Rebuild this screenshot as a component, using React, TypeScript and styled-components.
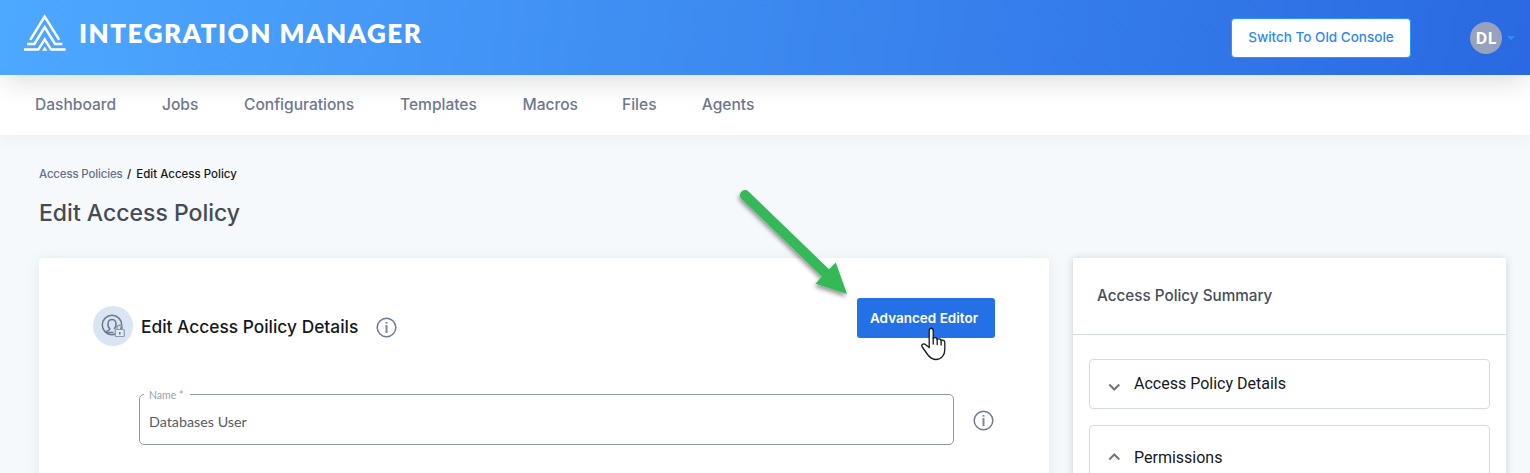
import React from "react";
import styled, { createGlobalStyle } from "styled-components";

const Global = createGlobalStyle`
  * { box-sizing: border-box; }
  html, body { margin: 0; padding: 0; overflow: hidden; background: #f5f9fc; }
  body { font-family: Inter, "Liberation Sans", sans-serif; }
`;

const Page = styled.div`
  position: relative;
  height: 473px;
  overflow: hidden;
  background: #f5f9fc;
`;

const Header = styled.header`
  position: relative;
  z-index: 2;
  display: flex;
  align-items: center;
  height: 75px;
  padding: 0 15px 0 24px;
  background: linear-gradient(100deg, #4da8ff 0%, #2a69e1 100%);
  box-shadow: 0 12px 24px -4px rgba(40, 60, 60, 0.15);
`;

const Brand = styled.div`
  display: flex;
  align-items: center;
  margin-right: auto;
  padding-bottom: 10px;
  gap: 13px;
`;

const BrandName = styled.span`
  font-family: Lato, sans-serif;
  font-weight: 800;
  font-size: 26px;
  line-height: 26px;
  letter-spacing: 1.5px;
  color: #fff;
  white-space: nowrap;
`;

const ConsoleButton = styled.button`
  width: 180px;
  height: 40px;
  padding: 0 0 2px;
  border: 1px solid #2b95ff;
  border-radius: 4px;
  background: #fff;
  color: #2b8af5;
  font: 500 13.5px Inter, sans-serif;
  white-space: nowrap;
`;

const UserMenu = styled.div`
  display: flex;
  align-items: center;
  gap: 5px;
  margin-left: 59px;
`;

const Avatar = styled.span`
  display: flex;
  align-items: center;
  justify-content: center;
  width: 32px;
  height: 32px;
  border-radius: 50%;
  background: #98a2bd;
  color: #fff;
  font: 700 16px "Open Sans", sans-serif;
`;

const Caret = styled.span`
  border: 4px solid transparent;
  border-top-color: #2b90f5;
  border-bottom: 0;
`;

const Nav = styled.nav`
  position: relative;
  z-index: 1;
  display: flex;
  align-items: center;
  gap: 45.5px;
  height: 60px;
  padding: 0 0 2px 35px;
  background: #fff;
  box-shadow: 0 4px 16px rgba(50, 70, 80, 0.05);
`;

const NavItem = styled.a<{ $w: number }>`
  width: ${(p) => p.$w}px;
  color: #6e7991;
  font-size: 15.55px;
  font-weight: 500;
  white-space: nowrap;
`;

const Main = styled.main`
  padding: 31px 24px 0 39px;
`;

const Breadcrumb = styled.div`
  display: flex;
  gap: 4px;
  height: 16px;
  color: #15181d;
  font-size: 11.5px;
  line-height: 16px;
  font-weight: 500;
`;

const CrumbLink = styled.a`
  width: 84px;
  letter-spacing: -0.17px;
  white-space: nowrap;
  color: #66718a;
`;

const CrumbCurrent = styled.span`
  margin-left: 1px;
`;

const Title = styled.h1`
  margin: 15px 0 29px;
  height: 32px;
  line-height: 32px;
  font-size: 23px;
  font-weight: 500;
  color: #464c56;
`;

const Columns = styled.div`
  display: flex;
  gap: 24px;
`;

const Card = styled.section`
  width: 1010px;
  height: 260px;
  padding: 40px 54px;
  border-radius: 4px;
  background: #fff;
  box-shadow: 0 2px 14px rgba(60, 80, 100, 0.1);
`;

const CardHeader = styled.div`
  display: flex;
  height: 56px;
`;

const IconDisc = styled.span`
  display: flex;
  align-items: center;
  justify-content: center;
  width: 40px;
  height: 40px;
  margin: 8px 8px 0 0;
  border-radius: 50%;
  background: #d9e5f2;
`;

const CardTitle = styled.h2`
  margin: 18px 18px 0 0;
  font-size: 17.35px;
  line-height: 22px;
  height: 22px;
  font-weight: 500;
  color: #15181d;
  white-space: nowrap;
`;

const InfoSlot = styled.span<{ $top: number }>`
  display: flex;
  margin-top: ${(p) => p.$top}px;
`;

const EditorButton = styled.button`
  width: 138px;
  height: 40px;
  margin-left: auto;
  padding: 0 4px 0 0;
  border: 0;
  border-radius: 3px;
  background: #2471e7;
  color: #fff;
  font: 600 13.5px Inter, sans-serif;
  white-space: nowrap;
`;

const FieldRow = styled.div`
  display: flex;
  padding: 34px 0 0 46px;
  gap: 19px;
`;

const Field = styled.fieldset`
  width: 815px;
  height: 57px;
  margin: 0;
  padding: 0 0 0 5px;
  border: 1px solid #8e98b3;
  border-radius: 5px;
`;

const Legend = styled.legend`
  width: 46px;
  margin-left: -1px;
  padding: 0 0 0 5px;
  height: 12px;
  font: 400 10.5px/14px Lato, sans-serif;
  color: #98a0ac;
`;

const FieldValue = styled.div`
  padding: 13px 4px;
  font: 400 14.3px/18px Lato, sans-serif;
  color: #555b66;
`;

const Summary = styled.aside`
  width: 433px;
  height: 260px;
  background: #fff;
  box-shadow: 0 1px 8px rgba(50, 65, 80, 0.22);
`;

const SummaryTitle = styled.h3`
  margin: 0;
  height: 77px;
  padding-left: 24px;
  border-bottom: 1px solid #d3dbe5;
  line-height: 75px;
  font-size: 15.25px;
  font-weight: 500;
  color: #464e5a;
`;

const Accordions = styled.div`
  display: flex;
  flex-direction: column;
  gap: 16px;
  padding: 24px 16px;
`;

const Accordion = styled.div<{ $h: number }>`
  display: flex;
  align-items: center;
  gap: 13px;
  height: ${(p) => p.$h}px;
  flex-shrink: 0;
  padding-left: 18px;
  border: 1px solid #d3dbe5;
  border-radius: 4px;
  font: 400 16px/20px Roboto, sans-serif;
  color: #15181d;
`;

const ChevronSvg = styled.svg<{ $up: boolean }>`
  margin-top: ${(p) => (p.$up ? -3 : 5)}px;
`;

const Overlay = styled.svg<{ $x: number; $y: number }>`
  position: absolute;
  z-index: 5;
  left: ${(p) => p.$x}px;
  top: ${(p) => p.$y}px;
  pointer-events: none;
`;

const Logo = () => (
  <svg width="42" height="37" viewBox="0 0 42 37" fill="none" stroke="#fff" strokeWidth="2.5">
    <path d="M6.200 25.800L20.700 2.600L35.200 25.800" />
    <path d="M3 29.900H10.400L20.700 13.200L31 29.900H38.400" />
    <path d="M0 35.600H14.300L20.700 25.400L27.100 35.600H41.600" />
    <path d="M18 36.800L20.700 32.400L23.400 36.800Z" fill="#fff" stroke="none" />
  </svg>
);

const InfoIcon = () => (
  <svg width="21" height="21" viewBox="0 0 21 21" fill="none">
    <circle cx="10.500" cy="10.500" r="9.300" stroke="#6e7a94" strokeWidth="1.500" />
    <path d="M10.500 8V16" stroke="#7b869e" strokeWidth="2" />
    <path d="M10.500 5V6.700" stroke="#7b869e" strokeWidth="2" />
  </svg>
);

const PolicyIcon = () => (
  <svg width="24" height="24" viewBox="0 0 24 24" fill="none" stroke="#6c7892" strokeWidth="1.500">
    <circle cx="11" cy="11" r="9.700" />
    <path d="M5 18.200c.5-2 3.800-1.500 4-3.200-2.800-2-3.200-9.500 2-9.500s4.800 7.500 2 9.500" />
    <path d="M5.500 18.500h7" />
    <rect x="14.300" y="15.500" width="9" height="7" rx="1" fill="#e3e9f2" stroke="#8d98ad" strokeWidth="1.200" />
    <path d="M16 15v-1.500c0-3 5.300-3 5.300 0V15" stroke="#8d98ad" strokeWidth="1.300" />
    <path d="M18.800 18v2.500" />
  </svg>
);

const Chevron = ({ up = false }: { up?: boolean }) => (
  <ChevronSvg $up={up} width="13" height="8" viewBox="0 0 13 8" fill="none" stroke="#757575" strokeWidth="2">
    <path d={up ? "M1.300 6.500l5-5 5 5" : "M1.300 1.500l5 5 5-5"} />
  </ChevronSvg>
);

const navItems: [string, number][] = [
  ["Dashboard", 81.5],
  ["Jobs", 36.5],
  ["Configurations", 110.5],
  ["Templates", 77],
  ["Macros", 54],
  ["Files", 34.3],
  ["Agents", 54],
];

export default function App() {
  return (
    <Page>
      <Global />
      <Header>
        <Brand>
          <Logo />
          <BrandName>INTEGRATION MANAGER</BrandName>
        </Brand>
        <ConsoleButton>Switch To Old Console</ConsoleButton>
        <UserMenu>
          <Avatar>DL</Avatar>
          <Caret />
        </UserMenu>
      </Header>
      <Nav>
        {navItems.map(([label, w]) => (
          <NavItem key={label} $w={w}>{label}</NavItem>
        ))}
      </Nav>
      <Main>
        <Breadcrumb>
          <CrumbLink>Access Policies</CrumbLink>
          <span>/</span>
          <CrumbCurrent>Edit Access Policy</CrumbCurrent>
        </Breadcrumb>
        <Title>Edit Access Policy</Title>
        <Columns>
          <Card>
            <CardHeader>
              <IconDisc><PolicyIcon /></IconDisc>
              <CardTitle>Edit Access Poilicy Details</CardTitle>
              <InfoSlot $top={19}><InfoIcon /></InfoSlot>
              <EditorButton>Advanced Editor</EditorButton>
            </CardHeader>
            <FieldRow>
              <Field>
                <Legend>Name *</Legend>
                <FieldValue>Databases User</FieldValue>
              </Field>
              <InfoSlot $top={22}><InfoIcon /></InfoSlot>
            </FieldRow>
          </Card>
          <Summary>
            <SummaryTitle>Access Policy Summary</SummaryTitle>
            <Accordions>
              <Accordion $h={50}><Chevron />Access Policy Details</Accordion>
              <Accordion $h={66}><Chevron up />Permissions</Accordion>
            </Accordions>
          </Summary>
        </Columns>
      </Main>
      <Overlay $x={730} $y={180} width="130" height="130" viewBox="730 180 130 130">
        <defs>
          <filter id="arrowShadow" x="-20%" y="-20%" width="140%" height="140%">
            <feDropShadow dx="-1" dy="3" stdDeviation="2" floodColor="#000" floodOpacity=".4" />
          </filter>
        </defs>
        <path
          d="M741.500 198.800A5 5 0 0 1 748.500 191.500L829 269.200L835.800 262.500L847 294L815.500 283.800L821.800 276.500Z"
          fill="#36b958"
          filter="url(#arrowShadow)"
        />
      </Overlay>
      <Overlay $x={919} $y={326} width="30" height="36" viewBox="0 0 30 36">
        <path
          d="M10.200 4.500c0-3 4-3 4 0v8c1-1.500 3.700-1 4 .8 1.300-1 3.700-.3 3.900 1.200 1.400-.8 3.700 0 3.700 2v7.500c0 5-3.500 9.500-8.800 9.500-4 0-6-2-8-4.500l-5.800-8c-1.500-2.500 1.300-4 3.200-2.500l3.800 3z"
          fill="#fff" stroke="#111827" strokeWidth="1.300" strokeLinejoin="round"
        />
        <path d="M14.200 12v6M18.200 13v5.500M22.100 14.500v4.500" stroke="#111827" strokeWidth="1.300" fill="none" strokeLinecap="round" />
      </Overlay>
    </Page>
  );
}
